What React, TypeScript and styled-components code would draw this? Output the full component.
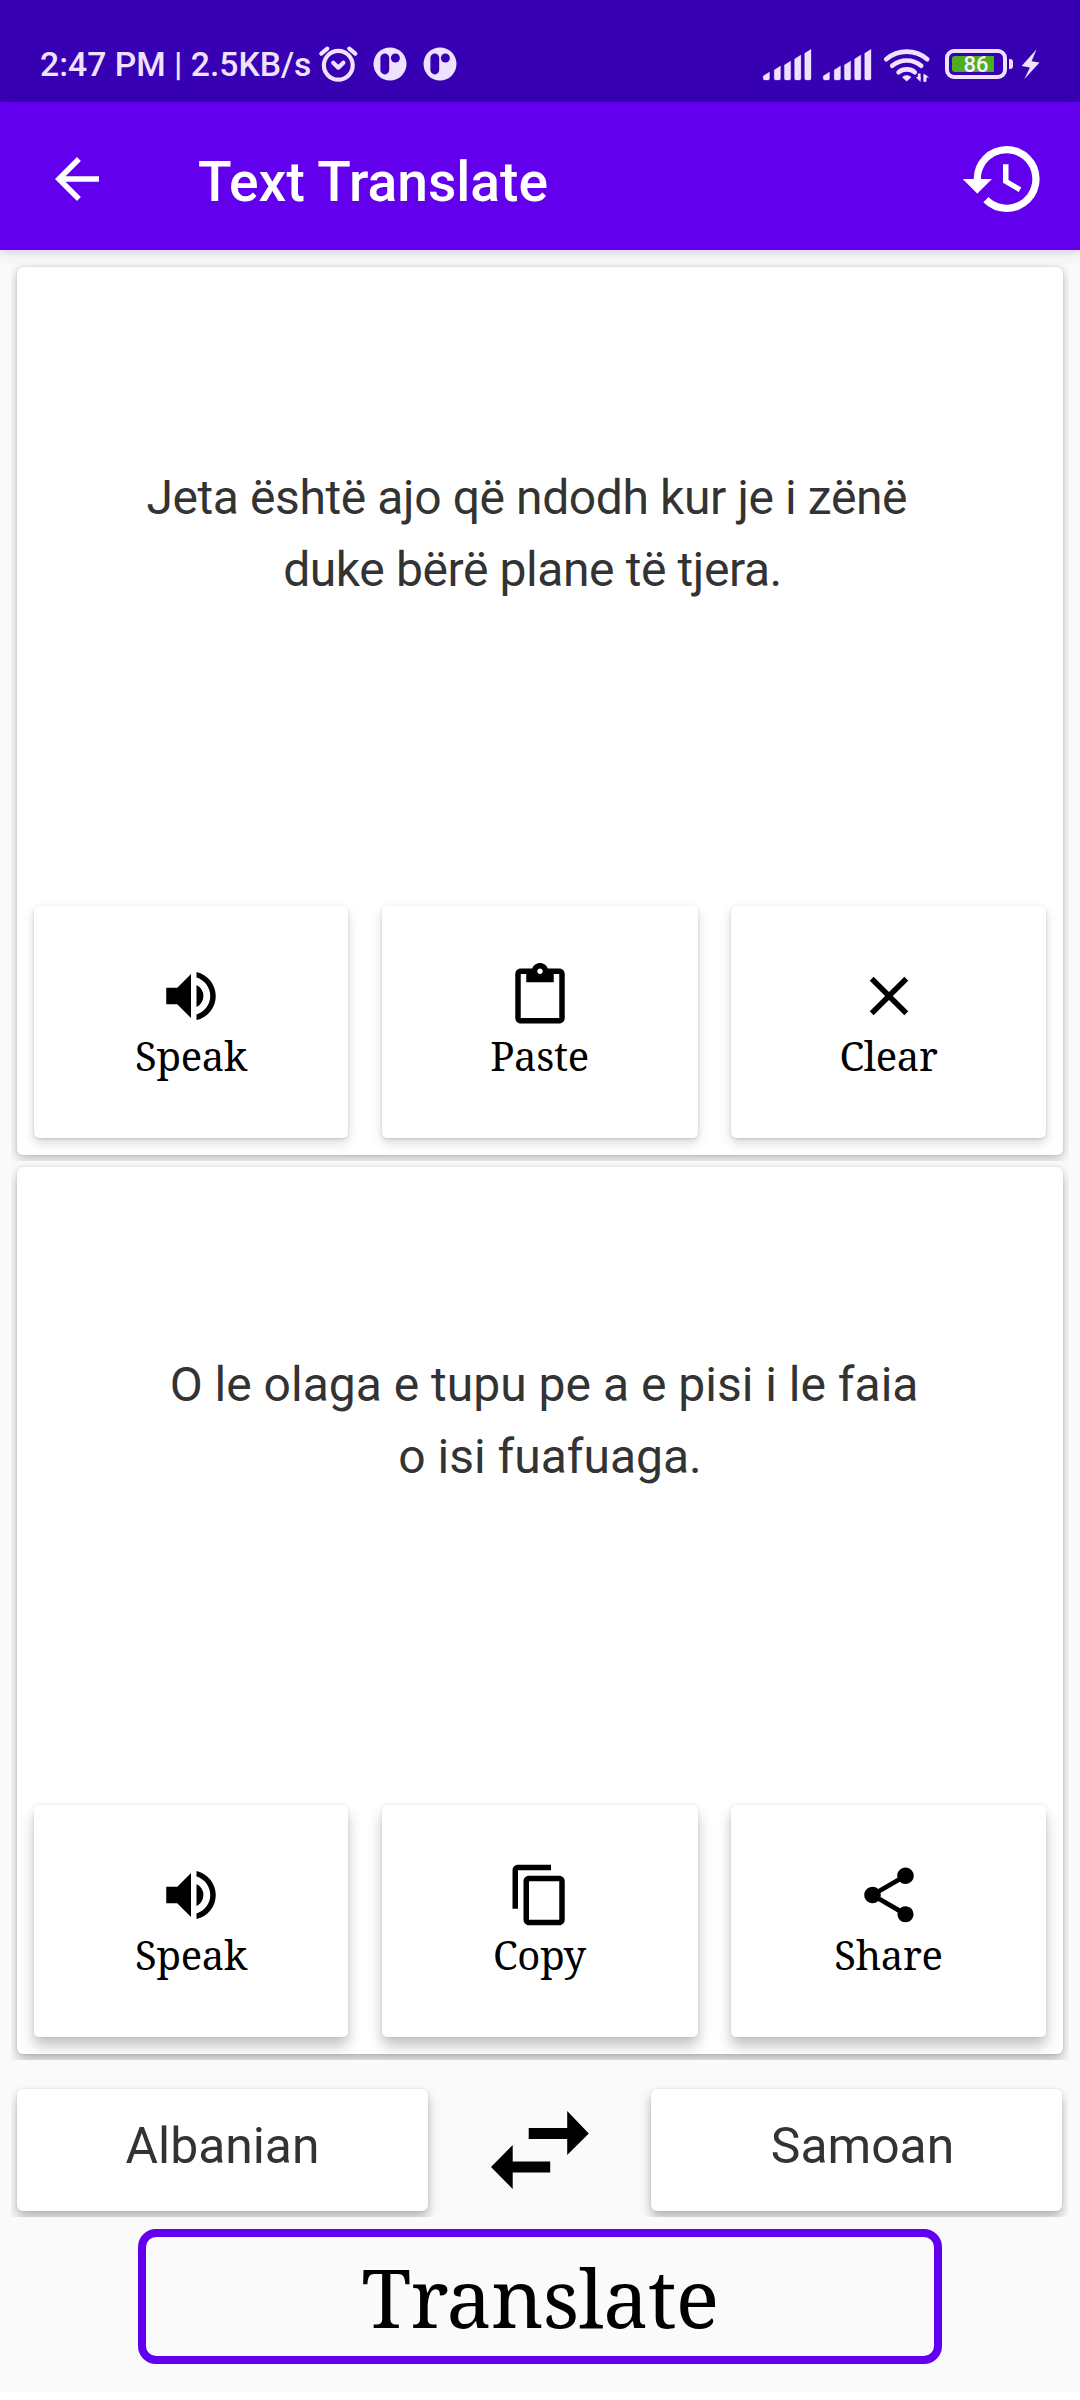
import React from "react";
import styled, { createGlobalStyle } from "styled-components";
import type { IconType } from "react-icons";
import {
  MdArrowBack,
  MdClose,
  MdContentCopy,
  MdContentPaste,
  MdHistory,
  MdShare,
  MdVolumeUp,
} from "react-icons/md";

const Global = createGlobalStyle`
  body { margin: 0; background: #fff; }
  * { box-sizing: border-box; }
  svg { display: block; flex: none; }
  button { border: 0; padding: 0; background: none; font: inherit; color: inherit; }
`;

const INK = "#eee2ff";
const STATUS_BG = "#3700b3";
const SERIF = '"Noto Serif", "DejaVu Serif", serif';

const Screen = styled.div`
  width: 1080px;
  height: 2392px;
  display: flex;
  flex-direction: column;
  background: #fafafa;
  font-family: Roboto, "Noto Sans", sans-serif;
`;

const StatusBar = styled.header`
  flex: none;
  height: 102px;
  padding: 26px 38px 0 40px;
  display: flex;
  align-items: center;
  justify-content: space-between;
  background: ${STATUS_BG};
  color: ${INK};
`;

const StatusGroup = styled.div<{ $before?: number; $after?: number }>`
  display: flex;
  align-items: center;
  margin: 0 ${(p) => p.$after ?? 0}px 0 ${(p) => p.$before ?? 0}px;
`;

const Clock = styled.span`
  width: 277px;
  padding-top: 2px;
  font-size: 33.7px;
  font-weight: 500;
  line-height: 40px;
  white-space: nowrap;
`;

const Battery = styled.div`
  width: 62px;
  height: 30px;
  padding: 3px;
  border: 4px solid ${INK};
  border-radius: 9px;
`;

const Charge = styled.div<{ $level: number }>`
  height: 16px;
  border-radius: 3px;
  background: linear-gradient(to right, #4caf1f ${(p) => p.$level}%, transparent ${(p) => p.$level}%);
  color: #f6efff;
  font-size: 22px;
  font-weight: 500;
  line-height: 18px;
  text-align: center;
`;

const BatteryTip = styled.div`
  width: 4px;
  height: 10px;
  margin-left: 2px;
  border-radius: 0 3px 3px 0;
  background: ${INK};
`;

const AppBar = styled.nav`
  flex: none;
  height: 148px;
  padding: 6px 33px 0 44px;
  display: flex;
  align-items: center;
  background: #6200ee;
  color: #fff;
  box-shadow: 0 3px 5px rgba(98, 0, 238, 0.08), 0 2px 16px rgba(0, 0, 0, 0.12);
`;

const Title = styled.h1`
  flex: 1;
  margin: 0;
  padding: 6px 0 0 88px;
  font-size: 55.2px;
  font-weight: 500;
  line-height: 64px;
`;

const Content = styled.main`
  padding: 17px 17px 0;
  display: flex;
  flex-direction: column;
`;

const Panel = styled.section<{ $deep?: boolean }>`
  height: ${(p) => (p.$deep ? 887 : 888)}px;
  margin-top: ${(p) => (p.$deep ? 12 : 0)}px;
  display: flex;
  flex-direction: column;
  border-radius: 6px;
  background: #fff;
  box-shadow: 0 ${(p) => (p.$deep ? 6 : 4)}px 12px rgba(0, 0, 0, ${(p) => (p.$deep ? 0.27 : 0.24)}),
    0 0 3px rgba(0, 0, 0, 0.12);
  clip-path: inset(-6px);
`;

const Passage = styled.p<{ $tight?: boolean }>`
  flex: 1;
  margin: 0;
  padding: ${(p) => (p.$tight ? "195px 15px 0 0" : "182px 0 0 20px")};
  color: #333;
  font-size: 48px;
  letter-spacing: ${(p) => (p.$tight ? "-0.4px" : "0")};
  line-height: 72px;
  text-align: center;
  white-space: pre-line;
`;

const Actions = styled.div`
  display: grid;
  grid-template-columns: 314px 316px 315px;
  justify-content: space-between;
  padding: 0 17px 17px;
`;

const ActionCard = styled.button<{ $deep?: boolean }>`
  height: 232px;
  padding-top: 2px;
  display: flex;
  flex-direction: column;
  align-items: center;
  justify-content: center;
  border-radius: 5px;
  background: #fff;
  color: #000;
  font-family: ${SERIF};
  font-size: 40px;
  letter-spacing: -0.3px;
  line-height: 54px;
  box-shadow: ${(p) =>
    p.$deep
      ? "0 9px 14px rgba(0,0,0,.24), 0 0 3px rgba(0,0,0,.1)"
      : "0 5px 12px rgba(0,0,0,.15), 0 1px 3px rgba(0,0,0,.15)"};
`;

const Languages = styled.div`
  height: 157px;
  padding: 35px 1px 0 0;
  display: flex;
  justify-content: space-between;
  align-items: center;
`;

const LanguageCard = styled.button<{ $shift?: number; $side: "left" | "right" }>`
  width: 411px;
  height: 122px;
  padding: 0 0 8px ${(p) => p.$shift ?? 0}px;
  border-radius: 6px;
  background: #fff;
  color: #333;
  font-size: 49.8px;
  box-shadow: 0 7px 12px rgba(0, 0, 0, 0.27), 0 0 3px rgba(0, 0, 0, 0.1);
  clip-path: ${(p) => (p.$side === "left" ? "inset(-8px -16px -6px -6px)" : "inset(-8px -6px -6px -16px)")};
`;

const TranslateButton = styled.button`
  width: 804px;
  height: 135px;
  margin: 17.5px auto 0;
  padding-top: 2px;
  border: 8px solid #6200ee;
  border-radius: 18px;
  color: #000;
  font-family: ${SERIF};
  font-size: 81px;
  letter-spacing: -0.7px;
  line-height: 110px;
`;

const AlarmIcon = () => (
  <svg width="44" height="40" viewBox="317 44 44 40" fill="none" stroke={INK} strokeWidth="4.2" strokeLinecap="round" strokeLinejoin="round">
    <circle cx="338.3" cy="65.3" r="14.4" />
    <path d="M321.3 53.6l6-5M355.3 53.6l-6-5M333.2 62.8l5.1 4.8 5.1-4.8" />
  </svg>
);

const DiscIcon = () => (
  <svg width="50" height="40" viewBox="365 44 50 40">
    <circle cx="390" cy="64" r="16.5" fill={INK} />
    <rect x="380.4" y="53.4" width="8.8" height="21" rx="4.4" fill={STATUS_BG} />
    <circle cx="395.4" cy="58" r="4.5" fill={STATUS_BG} />
  </svg>
);

const SIGNAL_BARS = [
  [763.2, 72],
  [774.2, 66],
  [784.4, 61],
  [794.6, 55],
  [804.7, 49.3],
];

const SignalIcon = () => (
  <svg width="60" height="40" viewBox="760 44 60 40" fill={INK}>
    {SIGNAL_BARS.map(([x, y]) => (
      <path key={x} d={`M${x} ${y + 4}l6.3-4V78.6q0 1.4-1.4 1.4H${x + 1.4}q-1.4 0-1.4-1.4z`} stroke={INK} strokeWidth=".3" />
    ))}
  </svg>
);

const WifiIcon = () => (
  <svg width="56" height="40" viewBox="880 44 56 40" fill="none" stroke={INK} strokeWidth="4.6" strokeLinecap="round">
    <path d="M886.2 59.2a31.5 31.5 0 0 1 41 0" />
    <path d="M892.2 65.8a22.5 22.5 0 0 1 29 0" />
    <path d="M898.6 72.2a13 13 0 0 1 16.2 0" />
    <path d="M903.2 77.2q3.500-2.600 7 0l-3.500 3.200z" fill={INK} strokeWidth="1.5" strokeLinejoin="round" />
    <path d="M919.2 73.500v6M925 81.500v-6.500" strokeWidth="2.8" strokeLinecap="butt" />
    <path d="M915.8 77h4.800v5zM923.6 81.800v-8.300l5.600 4h-3v4.300z" fill={INK} stroke="none" />
  </svg>
);

const BoltIcon = () => (
  <svg width="22" height="40" viewBox="1020 44 22 40" fill={INK}>
    <path d="M1036.6 49.300l-15 16.700 8.300 1.500-5.600 11.700 15.200-16.700-7.900-1.300z" />
  </svg>
);

const SwapIcon = () => (
  <svg width="98" height="78" viewBox="0.8 0 98 78" fill="#000">
    <path d="M0.800 56l21.700-22v16.500H60v11H22.500V78z" />
    <path d="M98.600 22.500L77 0v17H38.500v11H77v16z" />
  </svg>
);

type Action = { label: string; icon: IconType };

const sourceActions: Action[] = [
  { label: "Speak", icon: MdVolumeUp },
  { label: "Paste", icon: MdContentPaste },
  { label: "Clear", icon: MdClose },
];

const resultActions: Action[] = [
  { label: "Speak", icon: MdVolumeUp },
  { label: "Copy", icon: MdContentCopy },
  { label: "Share", icon: MdShare },
];

const ActionRow = ({ items, deep }: { items: Action[]; deep?: boolean }) => (
  <Actions>
    {items.map(({ label, icon: Icon }) => (
      <ActionCard key={label} $deep={deep}>
        <Icon size={66} />
        {label}
      </ActionCard>
    ))}
  </Actions>
);

export default function App() {
  return (
    <>
      <Global />
      <Screen>
        <StatusBar>
          <StatusGroup>
            <Clock>2:47 PM | 2.5KB/s</Clock>
            <AlarmIcon />
            <StatusGroup $before={4}>
              <DiscIcon />
              <DiscIcon />
            </StatusGroup>
          </StatusGroup>
          <StatusGroup>
            <SignalIcon />
            <SignalIcon />
            <WifiIcon />
            <StatusGroup $before={9} $after={7}>
              <Battery>
                <Charge $level={87}>86</Charge>
              </Battery>
              <BatteryTip />
            </StatusGroup>
            <BoltIcon />
          </StatusGroup>
        </StatusBar>
        <AppBar>
          <MdArrowBack size={66} />
          <Title>Text Translate</Title>
          <MdHistory size={88} />
        </AppBar>
        <Content>
          <Panel>
            <Passage $tight>
              {"Jeta është ajo që ndodh kur je i zënë\u00a0\nduke bërë plane të tjera."}
            </Passage>
            <ActionRow items={sourceActions} />
          </Panel>
          <Panel $deep>
            <Passage>
              {"O le olaga e tupu pe a e pisi i le faia\u00a0\no isi fuafuaga."}
            </Passage>
            <ActionRow items={resultActions} deep />
          </Panel>
          <Languages>
            <LanguageCard $side="left">Albanian</LanguageCard>
            <SwapIcon />
            <LanguageCard $side="right" $shift={12}>Samoan</LanguageCard>
          </Languages>
          <TranslateButton>Translate</TranslateButton>
        </Content>
      </Screen>
    </>
  );
}
